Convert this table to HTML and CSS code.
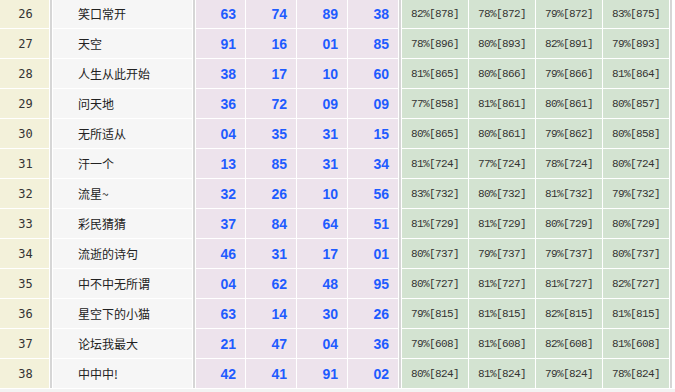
FILE: index.html
```html
<!DOCTYPE html>
<html lang="zh-CN">
<head>
<meta charset="utf-8">
<title>排行</title>
<link rel="stylesheet" href="styles.css">
</head>
<body>
<div class="wrap">
<table class="rank">
<colgroup>
<col class="c-no"><col class="c-sep"><col class="c-name"><col class="c-sep">
<col class="c-p1"><col class="c-p"><col class="c-p"><col class="c-p"><col class="c-sep">
<col class="c-g"><col class="c-g"><col class="c-g"><col class="c-g"><col class="c-sep">
</colgroup>
<tbody>
<tr><td class="no">26</td><td class="sep" rowspan="13"></td><td class="name">笑口常开</td><td class="sep" rowspan="13"></td><td class="num">63</td><td class="num">74</td><td class="num">89</td><td class="num">38</td><td class="sep" rowspan="13"></td><td class="pct">82%[878]</td><td class="pct">78%[872]</td><td class="pct">79%[872]</td><td class="pct">83%[875]</td><td class="sep" rowspan="13"></td></tr>
<tr><td class="no">27</td><td class="name">天空</td><td class="num">91</td><td class="num">16</td><td class="num">01</td><td class="num">85</td><td class="pct">78%[896]</td><td class="pct">80%[893]</td><td class="pct">82%[891]</td><td class="pct">79%[893]</td></tr>
<tr><td class="no">28</td><td class="name">人生从此开始</td><td class="num">38</td><td class="num">17</td><td class="num">10</td><td class="num">60</td><td class="pct">81%[865]</td><td class="pct">80%[866]</td><td class="pct">79%[866]</td><td class="pct">81%[864]</td></tr>
<tr><td class="no">29</td><td class="name">问天地</td><td class="num">36</td><td class="num">72</td><td class="num">09</td><td class="num">09</td><td class="pct">77%[858]</td><td class="pct">81%[861]</td><td class="pct">80%[861]</td><td class="pct">80%[857]</td></tr>
<tr><td class="no">30</td><td class="name">无所适从</td><td class="num">04</td><td class="num">35</td><td class="num">31</td><td class="num">15</td><td class="pct">80%[865]</td><td class="pct">80%[861]</td><td class="pct">79%[862]</td><td class="pct">80%[858]</td></tr>
<tr><td class="no">31</td><td class="name">汗一个</td><td class="num">13</td><td class="num">85</td><td class="num">31</td><td class="num">34</td><td class="pct">81%[724]</td><td class="pct">77%[724]</td><td class="pct">78%[724]</td><td class="pct">80%[724]</td></tr>
<tr><td class="no">32</td><td class="name">流星~</td><td class="num">32</td><td class="num">26</td><td class="num">10</td><td class="num">56</td><td class="pct">83%[732]</td><td class="pct">80%[732]</td><td class="pct">81%[732]</td><td class="pct">79%[732]</td></tr>
<tr><td class="no">33</td><td class="name">彩民猜猜</td><td class="num">37</td><td class="num">84</td><td class="num">64</td><td class="num">51</td><td class="pct">81%[729]</td><td class="pct">81%[729]</td><td class="pct">80%[729]</td><td class="pct">80%[729]</td></tr>
<tr><td class="no">34</td><td class="name">流逝的诗句</td><td class="num">46</td><td class="num">31</td><td class="num">17</td><td class="num">01</td><td class="pct">80%[737]</td><td class="pct">79%[737]</td><td class="pct">79%[737]</td><td class="pct">80%[737]</td></tr>
<tr><td class="no">35</td><td class="name">中不中无所谓</td><td class="num">04</td><td class="num">62</td><td class="num">48</td><td class="num">95</td><td class="pct">80%[727]</td><td class="pct">81%[727]</td><td class="pct">81%[727]</td><td class="pct">82%[727]</td></tr>
<tr><td class="no">36</td><td class="name">星空下的小猫</td><td class="num">63</td><td class="num">14</td><td class="num">30</td><td class="num">26</td><td class="pct">79%[815]</td><td class="pct">81%[815]</td><td class="pct">82%[815]</td><td class="pct">81%[815]</td></tr>
<tr><td class="no">37</td><td class="name">论坛我最大</td><td class="num">21</td><td class="num">47</td><td class="num">04</td><td class="num">36</td><td class="pct">79%[608]</td><td class="pct">81%[608]</td><td class="pct">82%[608]</td><td class="pct">81%[608]</td></tr>
<tr><td class="no">38</td><td class="name">中中中!</td><td class="num">42</td><td class="num">41</td><td class="num">91</td><td class="num">02</td><td class="pct">80%[824]</td><td class="pct">81%[824]</td><td class="pct">79%[824]</td><td class="pct">78%[824]</td></tr>
</tbody>
</table>
</div>
</body>
</html>
```
FILE: styles.css
```css
html, body {
  margin: 0;
  padding: 0;
}
body {
  background: #f3f3f3;
  font-family: "Liberation Sans", "Noto Sans CJK SC", sans-serif;
  color: #333;
  overflow: hidden;
}
.wrap {
  background: #ffffff;
  margin-top: -2px;
}
.rank {
  border-collapse: separate;
  border-spacing: 1px;
  table-layout: fixed;
  width: 673px;
  margin-left: -1px;
  background: #ffffff;
}
.c-no { width: 49px; }
.c-sep { width: 2px; }
.c-name { width: 139px; }
.c-p1 { width: 49px; }
.c-p { width: 50px; }
.c-g { width: 66px; }
.rank td {
  height: 29px;
  padding: 0;
  white-space: nowrap;
  overflow: hidden;
}
.rank .sep {
  background: #d6d6d6;
}
.rank .no {
  background: #f3f1da;
  text-align: center;
  font-family: "DejaVu Sans Mono", monospace;
  font-size: 12px;
  padding-left: 2px;
  color: #333;
}
.rank .name {
  background: #f6f6f6;
  padding-left: 25px;
  font-family: "Noto Sans CJK SC", "Liberation Sans", sans-serif;
  font-size: 12px;
  color: #222;
}
.rank .num {
  background: #ede3ec;
  text-align: right;
  padding-right: 9px;
  font-family: "Liberation Sans", sans-serif;
  font-weight: bold;
  font-size: 14px;
  color: #1f5cff;
}
.rank .pct {
  background: #d3e3d1;
  text-align: center;
  font-family: "Liberation Mono", monospace;
  font-size: 11px;
  letter-spacing: -0.6px;
  color: #333;
}
```
